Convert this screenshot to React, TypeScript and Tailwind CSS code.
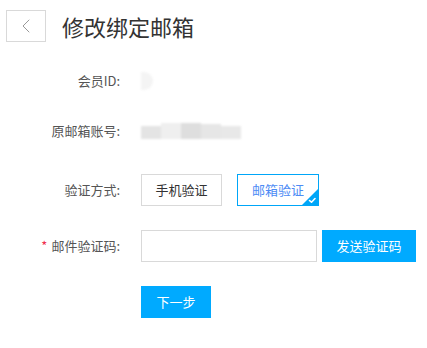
import { useState } from 'react';
import { ChevronLeft } from 'lucide-react';

const font = { fontFamily: '"Noto Sans CJK SC", "Noto Sans", sans-serif' };

function Label({ children, required }: { children: React.ReactNode; required?: boolean }) {
  return (
    <div className="w-[121px] shrink-0 text-right text-[13px] text-[#555] pr-[1px]">
      {required && <span className="text-[#f0304d] mr-[4px]">*</span>}
      {children}
    </div>
  );
}

export default function App() {
  const [method, setMethod] = useState<'phone' | 'email'>('email');
  const [code, setCode] = useState('');

  return (
    <div className="w-[427px] h-[348px] bg-white" style={font}>
      {/* Header */}
      <div className="flex items-center pt-[10px] pl-[6px]">
        <button className="w-[40px] h-[32px] border border-[#d9d9d9] flex items-center justify-center bg-white">
          <ChevronLeft size={24} strokeWidth={1} className="text-[#999]" />
        </button>
        <h1 className="ml-[16px] text-[22px] leading-none text-[#333]">修改绑定邮箱</h1>
      </div>

      {/* Form */}
      <div className="flex flex-col mt-[23px]">
        <div className="flex items-center h-[32px] gap-[20px]">
          <Label>会员ID:</Label>
          <div className="w-[12px] h-[18px] rounded-r-full bg-[#f4f4f4] blur-[1px]" />
        </div>

        <div className="flex items-center h-[32px] gap-[20px] mt-[18px]">
          <Label>原邮箱账号:</Label>
          <div className="flex items-center h-[16px] blur-[1px]">
            <div className="w-[20px] h-[13px] mt-[3px] bg-[#e4e4e4]" />
            <div className="w-[20px] h-[16px] bg-[#efefef]" />
            <div className="w-[20px] h-[16px] bg-[#dedede]" />
            <div className="w-[20px] h-[15px] mt-[1px] bg-[#e6e6e6]" />
            <div className="w-[20px] h-[13px] mt-[3px] bg-[#e8e8e8]" />
          </div>
        </div>

        <div className="flex items-center h-[32px] gap-[20px] mt-[27px]">
          <Label>验证方式:</Label>
          <div className="flex gap-[15px]">
            <button
              onClick={() => setMethod('phone')}
              className={`relative w-[81px] h-[32px] text-[13px] border overflow-hidden ${
                method === 'phone' ? 'border-[#00a6f8] text-[#00a6f8]' : 'border-[#d9d9d9] text-[#333]'
              }`}
            >
              手机验证
              {method === 'phone' && <Corner />}
            </button>
            <button
              onClick={() => setMethod('email')}
              className={`relative w-[82px] h-[32px] text-[13px] border overflow-hidden ${
                method === 'email' ? 'border-[#00a6f8] text-[#4d8bf5]' : 'border-[#d9d9d9] text-[#333]'
              }`}
            >
              邮箱验证
              {method === 'email' && <Corner />}
            </button>
          </div>
        </div>

        <div className="flex items-center h-[32px] gap-[20px] mt-[24px]">
          <Label required>邮件验证码:</Label>
          <div className="flex gap-[5px]">
            <input
              value={code}
              onChange={e => setCode(e.target.value)}
              className="w-[176px] h-[32px] border border-[#d9d9d9] outline-none px-2 text-[13px]"
            />
            <button className="w-[94px] h-[32px] bg-[#00aaff] text-white text-[13px]">发送验证码</button>
          </div>
        </div>

        <div className="flex items-center h-[32px] gap-[20px] mt-[24px]">
          <div className="w-[121px] shrink-0" />
          <button className="w-[70px] h-[32px] bg-[#00aaff] text-white text-[13px]">下一步</button>
        </div>
      </div>
    </div>
  );
}

function Corner() {
  return (
    <svg className="absolute right-0 bottom-0" width="16" height="16" viewBox="0 0 16 16">
      <polygon points="16,0 16,16 0,16" fill="#00a6f8" />
      <path d="M7.5 11.5 L9.5 13.2 L13 9.5" stroke="white" strokeWidth="1.6" fill="none" strokeLinecap="round" strokeLinejoin="round" />
    </svg>
  );
}
